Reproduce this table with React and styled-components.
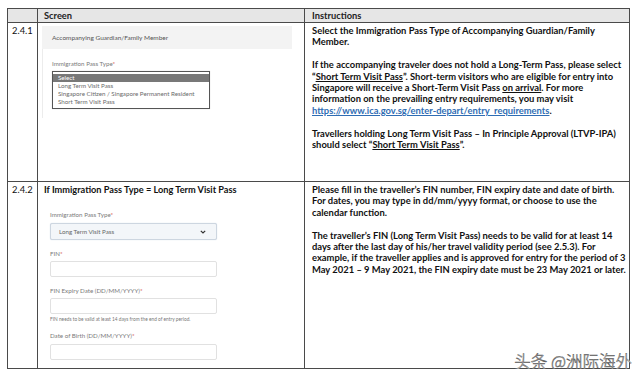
import React from "react";
import styled, { createGlobalStyle } from "styled-components";

const Global = createGlobalStyle`
  html, body { margin: 0; padding: 0; background: #fff; }
  body { font-family: Lato, "Liberation Sans", sans-serif; }
`;

const Page = styled.div`
  padding: 8px 0 0 7px;
`;

const Table = styled.div`
  position: relative;
  display: grid;
  grid-template-columns: 30px 267px 324px;
  grid-template-rows: 14px 159px 186px;
  width: 621px;
  border: 1px solid #4a4a4a;
  color: #111;
`;

const Cell = styled.div`
  box-sizing: border-box;
  border-right: ${(p) => (p.$lastCol ? "none" : "1px solid #4a4a4a")};
  border-bottom: ${(p) => (p.$lastRow ? "none" : "1px solid #4a4a4a")};
  background: ${(p) => (p.$head ? "#e6e6e6" : "#fff")};
  overflow: hidden;
`;

const HeadText = styled.div`
  font-weight: 700;
  font-size: 9.3px;
  line-height: 13px;
  padding-left: ${(p) => p.$pl || 6}px;
  color: #222;
`;

const Num = styled.div`
  font-size: 9.4px;
  line-height: 11.4px;
  padding: 2px 0 0 4px;
`;

const Instr = styled.div`
  padding: 2px 0 0 7px;
  font-weight: 700;
  font-size: 9.4px;
  line-height: 11.4px;
  white-space: nowrap;
`;

const Para = styled.p`
  margin: 0 0 11.4px 0;
`;

const U = styled.span`
  text-decoration: underline;
`;

const Link = styled.span`
  color: #2f6db4;
  text-decoration: underline;
`;

/* --- mock screen, row 1 --- */
const ScreenWrap = styled.div`
  padding: 3px 0 0 4px;
`;

const MockHeader = styled.div`
  width: 250px;
  height: 23px;
  background: #f3f3f3;
  font-size: 6.5px;
  line-height: 23px;
  color: #555;
  padding-left: 10px;
  box-sizing: border-box;
`;

const MockBody = styled.div`
  border-left: 1px solid #ececec;
  height: 69px;
  padding: 11px 0 0 9px;
  box-sizing: border-box;
`;

const Label = styled.div`
  font-size: 6.2px;
  line-height: 8px;
  color: #7a7a7a;
  white-space: nowrap;
`;

const Star = styled.span`
  color: #d9534f;
`;

const ListBox = styled.div`
  margin-top: 3px;
  width: 158px;
  height: 38px;
  box-sizing: border-box;
  border: 1px solid #555;
  padding: 2px 0;
  box-shadow: 0 0 1px rgba(0, 0, 0, 0.2);
`;

const Option = styled.div`
  font-size: 6.2px;
  line-height: 8px;
  height: 8px;
  padding-left: 5px;
  color: ${(p) => (p.$sel ? "#fff" : "#6a6a6a")};
  background: ${(p) => (p.$sel ? "#787878" : "transparent")};
  white-space: nowrap;
`;

/* --- mock screen, row 2 --- */
const Title = styled.div`
  padding: 2px 0 0 6px;
  font-weight: 700;
  font-size: 9.2px;
  line-height: 11.4px;
  white-space: nowrap;
`;

const Form = styled.div`
  display: flex;
  flex-direction: column;
  gap: 10px;
  padding: 16px 0 0 12px;
`;

const Field = styled.div`
  display: flex;
  flex-direction: column;
  gap: ${(p) => p.$gap || 3}px;
`;

const SelectBox = styled.div`
  width: 167px;
  height: 17px;
  box-sizing: border-box;
  background: #f3f6f9;
  border: 1px solid #cdd6e0;
  border-radius: 2px;
  box-shadow: 0 0 1px rgba(120, 150, 190, 0.4);
  display: flex;
  align-items: center;
  justify-content: space-between;
  padding: 0 10px 0 8px;
  font-size: 6.2px;
  color: #666;
`;

const Input = styled.div`
  width: 167px;
  height: 16px;
  box-sizing: border-box;
  background: #fff;
  border: 1px solid #e1e1e1;
  border-radius: 2px;
`;

const Help = styled.div`
  font-size: 4.8px;
  line-height: 6px;
  color: #777;
  margin-top: -1px;
  white-space: nowrap;
`;

const Watermark = styled.div`
  position: absolute;
  right: -3px;
  bottom: -3px;
  font-family: "Noto Sans CJK SC", sans-serif;
  font-size: 16.5px;
  font-weight: 300;
  line-height: 19px;
  color: #fdfdfd;
  -webkit-text-stroke: 0.5px #555;
  white-space: nowrap;
`;

const Chevron = () => (
  <svg width="6" height="4" viewBox="0 0 6 4">
    <polyline points="0.8,0.8 3,3 5.2,0.8" fill="none" stroke="#333" strokeWidth="1.2" />
  </svg>
);

export default function App() {
  return (
    <Page>
      <Global />
      <Table>
        <Cell $head />
        <Cell $head>
          <HeadText>Screen</HeadText>
        </Cell>
        <Cell $head $lastCol>
          <HeadText $pl={7}>Instructions</HeadText>
        </Cell>

        <Cell>
          <Num>2.4.1</Num>
        </Cell>
        <Cell>
          <ScreenWrap>
            <MockHeader>Accompanying Guardian/Family Member</MockHeader>
            <MockBody>
              <Label>
                Immigration Pass Type<Star>*</Star>
              </Label>
              <ListBox>
                <Option $sel>Select</Option>
                <Option>Long Term Visit Pass</Option>
                <Option>Singapore Citizen / Singapore Permanent Resident</Option>
                <Option>Short Term Visit Pass</Option>
              </ListBox>
            </MockBody>
          </ScreenWrap>
        </Cell>
        <Cell $lastCol>
          <Instr>
            <Para>
              Select the Immigration Pass Type of Accompanying Guardian/Family
              <br />
              Member.
            </Para>
            <Para>
              If the accompanying traveler does not hold a Long-Term Pass, please select
              <br />
              “<U>Short Term Visit Pass</U>”. Short-term visitors who are eligible for entry into
              <br />
              Singapore will receive a Short-Term Visit Pass <U>on arrival</U>. For more
              <br />
              information on the prevailing entry requirements, you may visit
              <br />
              <Link>https://www.ica.gov.sg/enter-depart/entry_requirements</Link>.
            </Para>
            <Para>
              Travellers holding Long Term Visit Pass – In Principle Approval (LTVP-IPA)
              <br />
              should select “<U>Short Term Visit Pass</U>”.
            </Para>
          </Instr>
        </Cell>

        <Cell $lastRow>
          <Num>2.4.2</Num>
        </Cell>
        <Cell $lastRow>
          <Title>If Immigration Pass Type = Long Term Visit Pass</Title>
          <Form>
            <Field $gap={4}>
              <Label>
                Immigration Pass Type<Star>*</Star>
              </Label>
              <SelectBox>
                <span>Long Term Visit Pass</span>
                <Chevron />
              </SelectBox>
            </Field>
            <Field>
              <Label>
                FIN<Star>*</Star>
              </Label>
              <Input />
            </Field>
            <Field>
              <Label>
                FIN Expiry Date (DD/MM/YYYY)<Star>*</Star>
              </Label>
              <Input />
              <Help>FIN needs to be valid at least 14 days from the end of entry period.</Help>
            </Field>
            <Field $gap={4}>
              <Label>
                Date of Birth (DD/MM/YYYY)<Star>*</Star>
              </Label>
              <Input />
            </Field>
          </Form>
        </Cell>
        <Cell $lastRow $lastCol>
          <Instr>
            <Para>
              Please fill in the traveller’s FIN number, FIN expiry date and date of birth.
              <br />
              For dates, you may type in dd/mm/yyyy format, or choose to use the
              <br />
              calendar function.
            </Para>
            <Para>
              The traveller’s FIN (Long Term Visit Pass) needs to be valid for at least 14
              <br />
              days after the last day of his/her travel validity period (see 2.5.3). For
              <br />
              example, if the traveller applies and is approved for entry for the period of 3
              <br />
              May 2021 – 9 May 2021, the FIN expiry date must be 23 May 2021 or later.
            </Para>
          </Instr>
        </Cell>
        <Watermark>头条 @洲际海外</Watermark>
      </Table>
    </Page>
  );
}
